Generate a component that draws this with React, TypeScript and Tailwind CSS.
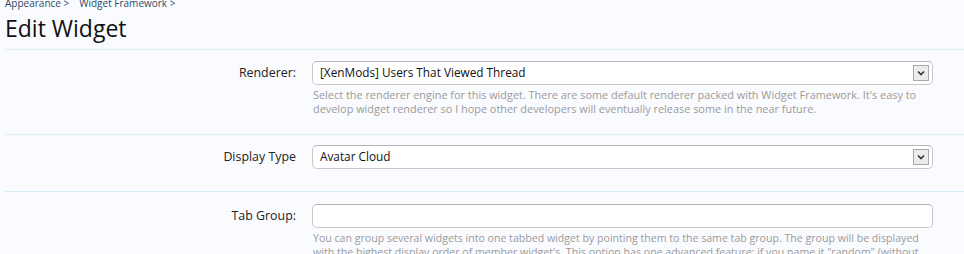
import React from "react";

const font = { fontFamily: '"Open Sans", "DejaVu Sans", sans-serif' };

function SelectBox({ value }: { value: string }) {
  return (
    <div className="flex h-[24px] w-full items-center justify-between rounded-[5px] border border-[#c8c8c8] border-t-[#b4b4b4] bg-white pl-[7px] pr-[3px] text-[11.8px] text-[#111]">
      <span>{value}</span>
      <span className="flex h-[16px] w-[16px] items-center justify-center border border-[#a8a8a8] bg-[#ececec]">
        <svg width="8" height="6" viewBox="0 0 8 6">
          <path d="M1 1.5 L4 4.5 L7 1.5" fill="none" stroke="#333" strokeWidth="1.6" />
        </svg>
      </span>
    </div>
  );
}

function Row({
  label,
  children,
  hint,
  hintClass = "text-[10.9px]",
  className,
}: {
  label: string;
  children: React.ReactNode;
  hint?: string;
  hintClass?: string;
  className: string;
}) {
  return (
    <div className={`flex border-b border-[#d7edf7] ${className}`}>
      <div className="w-[291px] shrink-0 pt-[3px] text-right text-[12.4px] text-[#222]">{label}</div>
      <div className="ml-[16px] mr-[31px] flex-1">
        {children}
        {hint && <p className={`mt-[3px] pl-[1px] leading-[14px] text-[#9a9a9a] ${hintClass}`}>{hint}</p>}
      </div>
    </div>
  );
}

export default function App() {
  return (
    <div className="h-[254px] w-[964px] overflow-hidden bg-[#fafbfe]" style={font}>
      <div className="-mt-[5px] flex gap-[10px] pl-[5px] text-[10px] leading-[16px] text-[#2c4a66]">
        <span>Appearance &gt;</span>
        <span>Widget Framework &gt;</span>
      </div>
      <h1 className="pl-[5px] pt-[2px] text-[23px] leading-[30px] text-[#111]">Edit Widget</h1>
      <div className="ml-[5px] mt-[6px] border-t border-[#d7edf7]">
        <Row
          label="Renderer:"
          className="h-[85px] pt-[11px]"
          hint="Select the renderer engine for this widget. There are some default renderer packed with Widget Framework. It's easy to develop widget renderer so I hope other developers will eventually release some in the near future."
        >
          <SelectBox value="[XenMods] Users That Viewed Thread" />
        </Row>
        <Row label="Display Type" className="h-[57px] pt-[10px]">
          <SelectBox value="Avatar Cloud" />
        </Row>
        <Row
          label="Tab Group:"
          className="h-[90px] pt-[12px]"
          hintClass="text-[10.6px]"
          hint={'You can group several widgets into one tabbed widget by pointing them to the same tab group. The group will be displayed with the highest display order of member widget\'s. This option has one advanced feature: if you name it "random" (without quotes) the widgets will be randomized.'}
        >
          <div className="h-[24px] w-full rounded-[5px] border border-[#c8c8c8] border-t-[#b4b4b4] bg-white" />
        </Row>
      </div>
    </div>
  );
}
